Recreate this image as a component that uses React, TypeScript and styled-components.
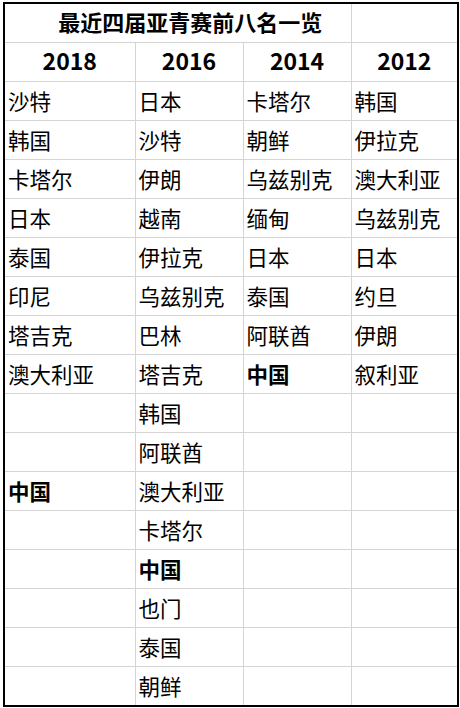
import React from 'react';
import styled, { createGlobalStyle } from 'styled-components';

const GlobalStyle = createGlobalStyle`
  html, body {
    margin: 0;
    padding: 0;
    background: #ffffff;
  }
  body {
    font-family: "Noto Sans CJK SC", "Noto Sans", sans-serif;
    color: #000000;
  }
`;

const Sheet = styled.div`
  padding: 2px 0 0 3px;
  width: 460px;
  height: 708px;
  box-sizing: border-box;
  overflow: hidden;
`;

const Table = styled.table`
  border-collapse: collapse;
  table-layout: fixed;
  width: 454px;
  border: 2px solid #000000;
`;

const Row = styled.tr`
  height: 39px;
`;

const Cell = styled.td<{ $bold?: boolean }>`
  border: 1px solid #d4d4d4;
  padding: 0 0 0 3px;
  height: 37.9px;
  font-size: 21.5px;
  font-weight: ${(p) => (p.$bold ? 700 : 400)};
  line-height: 1;
  white-space: nowrap;
  overflow: hidden;
  vertical-align: middle;
`;

const TitleCell = styled.td`
  border: 1px solid #d4d4d4;
  padding: 0 0 3px 25px;
  text-align: center;
  font-size: 22px;
  font-weight: 700;
  line-height: 1;
  white-space: nowrap;
`;

const YearCell = styled.td`
  border: 1px solid #d4d4d4;
  text-align: center;
  font-size: 23px;
  font-weight: 700;
  line-height: 1;
  padding: 0 0 3px 0;
`;

const years = ['2018', '2016', '2014', '2012'];

const columns: string[][] = [
  ['沙特', '韩国', '卡塔尔', '日本', '泰国', '印尼', '塔吉克', '澳大利亚', '', '', '中国'],
  ['日本', '沙特', '伊朗', '越南', '伊拉克', '乌兹别克', '巴林', '塔吉克', '韩国', '阿联酋', '澳大利亚', '卡塔尔', '中国', '也门', '泰国', '朝鲜'],
  ['卡塔尔', '朝鲜', '乌兹别克', '缅甸', '日本', '泰国', '阿联酋', '中国'],
  ['韩国', '伊拉克', '澳大利亚', '乌兹别克', '日本', '约旦', '伊朗', '叙利亚'],
];

const rowCount = 16;

export default function App() {
  const rows = Array.from({ length: rowCount }, (_, i) => columns.map((c) => c[i] ?? ''));

  return (
    <>
      <GlobalStyle />
      <Sheet>
        <Table>
          <colgroup>
            <col style={{ width: 131 }} />
            <col style={{ width: 108 }} />
            <col style={{ width: 108 }} />
            <col style={{ width: 107 }} />
          </colgroup>
          <tbody>
            <Row>
              <TitleCell colSpan={3}>最近四届亚青赛前八名一览</TitleCell>
              <Cell />
            </Row>
            <Row>
              {years.map((y) => (
                <YearCell key={y}>{y}</YearCell>
              ))}
            </Row>
            {rows.map((r, i) => (
              <Row key={i}>
                {r.map((name, j) => (
                  <Cell key={j} $bold={name === '中国'}>
                    {name}
                  </Cell>
                ))}
              </Row>
            ))}
          </tbody>
        </Table>
      </Sheet>
    </>
  );
}
